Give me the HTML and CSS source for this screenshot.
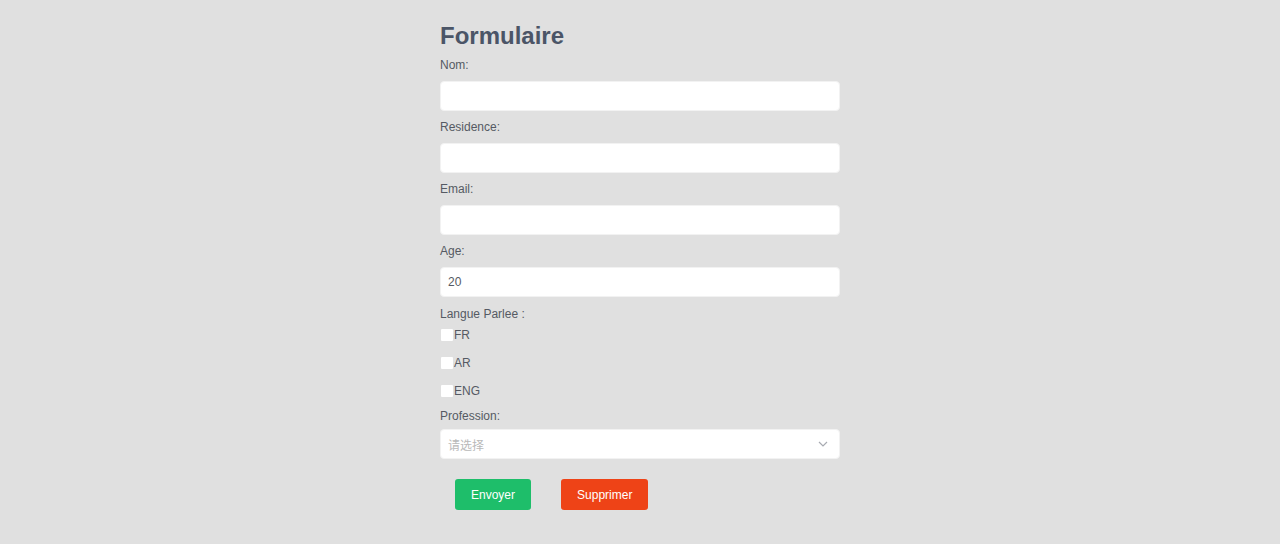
FILE: index.html
```html
<!DOCTYPE html>
<html lang="fr">
<head>
<meta charset="utf-8">
<title>Formulaire</title>
<link rel="stylesheet" href="styles.css">
</head>
<body>
<form class="form">
  <h1 class="title">Formulaire</h1>
  <div class="field">
    <label class="label">Nom:</label>
    <input class="input" type="text">
  </div>
  <div class="field">
    <label class="label">Residence:</label>
    <input class="input" type="text">
  </div>
  <div class="field">
    <label class="label">Email:</label>
    <input class="input" type="text">
  </div>
  <div class="field">
    <label class="label">Age:</label>
    <input class="input" type="text" value="20">
  </div>
  <div class="group">
    <div class="label group-label">Langue Parlee :</div>
    <div class="checks">
      <label class="check"><input type="checkbox" class="box">FR</label>
      <label class="check"><input type="checkbox" class="box">AR</label>
      <label class="check"><input type="checkbox" class="box">ENG</label>
    </div>
  </div>
  <div class="field">
    <label class="label label-tight">Profession:</label>
    <div class="select">
      <span class="placeholder">请选择</span>
      <svg class="chevron" width="10" height="6" viewBox="0 0 10 6"><path d="M1 1 L5 5 L9 1" fill="none" stroke="#a8abb2" stroke-width="1.2"/></svg>
    </div>
  </div>
  <div class="actions">
    <button type="button" class="btn btn-green">Envoyer</button>
    <button type="button" class="btn btn-red">Supprimer</button>
  </div>
</form>
</body>
</html>
```
FILE: styles.css
```css
html, body {
  margin: 0;
  padding: 0;
  background: #e0e0e0;
  font-family: "Liberation Sans", Arial, "Noto Sans CJK SC", sans-serif;
}
.form {
  width: 400px;
  margin: 0 auto;
  padding-top: 22px;
}
.title {
  margin: 0 0 8px 0;
  font-size: 24px;
  line-height: 28px;
  font-weight: bold;
  color: #4b5567;
}
.field {
  display: flex;
  flex-direction: column;
}
.label {
  display: block;
  font-size: 12px;
  line-height: 14px;
  color: #555a63;
  margin-bottom: 9px;
}
.label-tight {
  margin-bottom: 6px;
}
.input {
  box-sizing: border-box;
  height: 30px;
  width: 100%;
  margin: 0 0 9px 0;
  border: 1px solid #f2f2f2;
  border-radius: 4px;
  background: #fff;
  padding: 0 7px;
  font-family: inherit;
  font-size: 12px;
  color: #555a63;
  outline: none;
}
.group {
  padding-top: 1px;
}
.group-label {
  margin-bottom: 6px;
}
.checks {
  display: flex;
  flex-direction: column;
  gap: 12px;
  margin-bottom: 10px;
}
.check {
  display: flex;
  align-items: center;
  height: 16px;
  font-size: 12px;
  color: #555a63;
}
.box {
  -webkit-appearance: none;
  appearance: none;
  width: 12px;
  height: 12px;
  margin: 0 1px 0 1px;
  background: #fff;
  border: none;
  border-radius: 1px;
}
.select {
  box-sizing: border-box;
  height: 30px;
  display: flex;
  align-items: center;
  justify-content: space-between;
  background: #fff;
  border: 1px solid #f2f2f2;
  border-radius: 4px;
  padding: 0 11px 0 7px;
}
.placeholder {
  font-family: "Noto Sans CJK SC", sans-serif;
  font-size: 12px;
  color: #b9b9b9;
}
.chevron {
  display: block;
}
.actions {
  display: flex;
  gap: 30px;
  margin-top: 20px;
  padding-left: 15px;
}
.btn {
  height: 31px;
  padding: 0 16px;
  border: none;
  border-radius: 3px;
  color: #fff;
  font-family: inherit;
  font-size: 12px;
  font-weight: normal;
}
.btn-green {
  background: #1ebe6a;
}
.btn-red {
  background: #ee4317;
}
```
